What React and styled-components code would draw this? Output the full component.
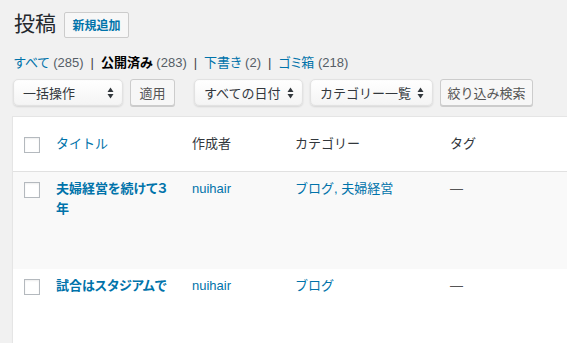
import React from 'react';
import styled, { createGlobalStyle } from 'styled-components';

const GlobalStyle = createGlobalStyle`
  html, body {
    margin: 0;
    background: #f1f1f1;
    overflow: hidden;
  }
  body {
    font-family: 'Liberation Sans', 'Noto Sans CJK JP', sans-serif;
    font-size: 13px;
    color: #32373c;
  }
`;

const posts = [
  {
    id: 1,
    title: '夫婦経営を続けて３年',
    author: 'nuihair',
    categories: 'ブログ, 夫婦経営',
    tags: '—',
    height: 97,
  },
  {
    id: 2,
    title: '試合はスタジアムで',
    author: 'nuihair',
    categories: 'ブログ',
    tags: '—',
    height: 120,
  },
];

const views = [
  { label: 'すべて', count: 285 },
  { label: '公開済み', count: 283, current: true },
  { label: '下書き', count: 2 },
  { label: 'ゴミ箱', count: 218 },
];

const Arrows = () => (
  <svg width='7' height='12' viewBox='0 0 7 12'>
    <path d='M3.5 0.5 L6.5 5 L0.5 5 Z' fill='#32373c' />
    <path d='M3.5 11.5 L6.5 7 L0.5 7 Z' fill='#32373c' />
  </svg>
);

const App = () => {
  return (
    <>
      <GlobalStyle />
      <Page>
        <Header>
          <Title>投稿</Title>
          <AddButton>新規追加</AddButton>
        </Header>
        <SubSub>
          {views.map((v, i) => (
            <li key={v.label}>
              <ViewLink current={v.current}>{v.label}</ViewLink>
              <Count> ({v.count})</Count>
              {i < views.length - 1 && <Sep>|</Sep>}
            </li>
          ))}
        </SubSub>
        <Filters>
          <Select width={110}>
            <span>一括操作</span>
            <Arrows />
          </Select>
          <Button width={45}>適用</Button>
          <Select width={109} gapLeft={19}>
            <span>すべての日付</span>
            <Arrows />
          </Select>
          <Select width={123}>
            <span>カテゴリー一覧</span>
            <Arrows />
          </Select>
          <Button width={93}>絞り込み検索</Button>
        </Filters>
        <Table>
          <HeadRow>
            <CheckCell>
              <Checkbox />
            </CheckCell>
            <Cell>
              <HeadLink>タイトル</HeadLink>
            </Cell>
            <Cell>作成者</Cell>
            <Cell>カテゴリー</Cell>
            <Cell>タグ</Cell>
          </HeadRow>
          {posts.map((post, i) => (
            <Row key={post.id} alt={i % 2 === 0} height={post.height}>
              <CheckCell>
                <Checkbox />
              </CheckCell>
              <Cell>
                <PostTitle>{post.title}</PostTitle>
              </Cell>
              <Cell>
                <Link>{post.author}</Link>
              </Cell>
              <Cell>
                <Link>{post.categories}</Link>
              </Cell>
              <Cell>
                <Dash>{post.tags}</Dash>
              </Cell>
            </Row>
          ))}
        </Table>
      </Page>
    </>
  );
};

const Page = styled.div`
  padding: 9px 0 0 12px;
  width: 640px;
`;

const Header = styled.div`
  display: flex;
  align-items: center;
  gap: 8px;
  padding-left: 2px;
`;

const Title = styled.h1`
  margin: 0;
  font-size: 21px;
  font-weight: 400;
  line-height: 29px;
  color: #23282d;
`;

const AddButton = styled.a`
  box-sizing: border-box;
  display: inline-flex;
  align-items: center;
  justify-content: center;
  width: 65px;
  height: 26px;
  margin-top: 2px;
  border: 1px solid #ccc;
  border-radius: 2px;
  background: #f7f7f7;
  color: #0073aa;
  font-weight: 600;
  font-size: 12px;
`;

const SubSub = styled.ul`
  display: flex;
  list-style: none;
  margin: 15px 0 0;
  padding: 0 0 0 2px;
  line-height: 20px;
  font-feature-settings: 'palt';
  li {
    white-space: pre;
  }
`;

const ViewLink = styled.a`
  color: ${(p) => (p.current ? '#000' : '#0073aa')};
  font-weight: ${(p) => (p.current ? 600 : 400)};
`;

const Count = styled.span`
  color: #555d66;
`;

const Sep = styled.span`
  color: #444;
  margin: 0 7px;
`;

const Filters = styled.div`
  display: flex;
  align-items: center;
  gap: 7px;
  margin-top: 6px;
  padding-left: 1px;
`;

const Select = styled.div`
  box-sizing: border-box;
  width: ${(p) => p.width}px;
  height: 27px;
  margin-left: ${(p) => (p.gapLeft ? p.gapLeft - 7 : 0)}px;
  display: flex;
  align-items: center;
  justify-content: space-between;
  padding: 0 8px 0 9px;
  border: 1px solid #e2e2e2;
  border-radius: 5px;
  background: linear-gradient(#ffffff, #f4f4f4);
  box-shadow: 0 1px 2px rgba(0, 0, 0, 0.12), inset 0 0 2px rgba(0, 0, 0, 0.04);
  color: #32373c;
  font-size: 13px;
`;

const Button = styled.div`
  box-sizing: border-box;
  width: ${(p) => p.width}px;
  height: 27px;
  display: flex;
  align-items: center;
  justify-content: center;
  border: 1px solid #ccc;
  border-radius: 3px;
  background: #f7f7f7;
  box-shadow: 0 1px 0 #ccc;
  color: #555;
  font-size: 13px;
`;

const Table = styled.div`
  margin-top: 10px;
  border: 1px solid #e5e5e5;
  background: #fff;
  box-shadow: 0 1px 1px rgba(0, 0, 0, 0.04);
`;

const columns = '33px 136px 103px 155px 1fr';

const HeadRow = styled.div`
  display: grid;
  grid-template-columns: ${columns};
  align-items: center;
  height: 54px;
  border-bottom: 1px solid #e1e1e1;
  color: #32373c;
`;

const Row = styled.div`
  display: grid;
  grid-template-columns: ${columns};
  align-items: start;
  min-height: ${(p) => p.height}px;
  padding-top: 7px;
  box-sizing: border-box;
  background: ${(p) => (p.alt ? '#f9f9f9' : '#fff')};
  line-height: 20px;
`;

const Cell = styled.div`
  padding: 0 10px;
  line-height: 20px;
`;

const CheckCell = styled.div`
  padding-left: 11px;
  display: flex;
  align-items: center;
  height: 20px;
`;

const Checkbox = styled.span`
  display: block;
  box-sizing: border-box;
  width: 16px;
  height: 16px;
  margin-top: 2px;
  border: 1px solid #b4b9be;
  background: #fff;
  box-shadow: inset 0 1px 2px rgba(0, 0, 0, 0.07);
`;

const HeadLink = styled.a`
  color: #0073aa;
`;

const Link = styled.a`
  color: #0073aa;
`;

const PostTitle = styled.a`
  color: #0073aa;
  font-weight: 600;
  font-feature-settings: 'palt';
`;

const Dash = styled.span`
  color: #555;
`;

export default App;
